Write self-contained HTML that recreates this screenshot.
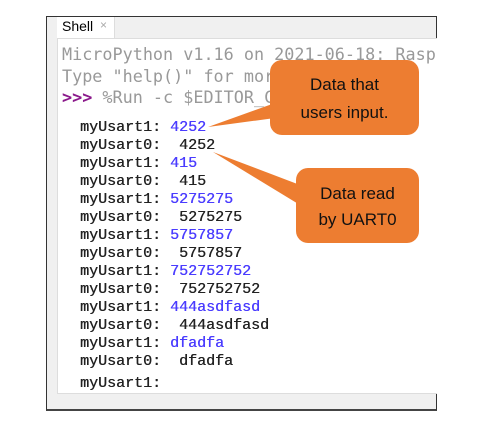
<!DOCTYPE html>
<html><head><style>
body{margin:0;width:488px;height:443px;background:#fff;position:relative;overflow:hidden}
.frame{position:absolute;left:46px;top:16px;width:389px;height:392px;border:1px solid #333;border-bottom:2px solid #444;background:#f0f0f0}
.tab{position:absolute;left:57px;top:17px;width:57px;height:21px;background:#fff;border-right:1px solid #ddd;font:14px "Liberation Sans",sans-serif}
.panel{position:absolute;left:57px;top:38px;width:379px;height:354px;background:#fff;border-left:1px solid #ddd;border-top:1px solid #ddd;border-bottom:1px solid #ddd;overflow:hidden}
.hd{position:absolute;left:62px;font:16.8px "DejaVu Sans Mono",monospace;color:#999;white-space:pre}
.o{position:absolute;left:80px;font:15px "Liberation Mono",monospace;color:#222;white-space:pre;line-height:18px;text-shadow:0.4px 0 0 #222}
.b{color:#4a3cff;text-shadow:0.3px 0 0 #4a3cff}
.call{position:absolute;background:#ed7d31;border-radius:12px;font:17px "Liberation Sans",sans-serif;color:#111;text-align:center}
</style></head><body>
<div class="frame"></div>
<div class="panel"></div>
<div class="tab"><span style="position:absolute;left:5px;top:1px">Shell</span><span style="position:absolute;left:43px;top:1px;color:#aaa;font-size:12px">×</span></div>
<div class="hd" style="top:44px;width:373px;overflow:hidden">MicroPython v1.16 on 2021-06-18: Rasp</div>
<div class="hd" style="top:66px">Type "help()" for more</div>
<div class="hd" style="top:87px"><span style="color:#8b1a8b;font-weight:bold">&gt;&gt;&gt;</span> %Run -c $EDITOR_C</div>
<div class="o" style="top:119px">myUsart1: <span class="b">4252</span>
myUsart0:  4252
myUsart1: <span class="b">415</span>
myUsart0:  415
myUsart1: <span class="b">5275275</span>
myUsart0:  5275275
myUsart1: <span class="b">5757857</span>
myUsart0:  5757857
myUsart1: <span class="b">752752752</span>
myUsart0:  752752752
myUsart1: <span class="b">444asdfasd</span>
myUsart0:  444asdfasd
myUsart1: <span class="b">dfadfa</span>
myUsart0:  dfadfa</div>
<div class="o" style="top:375px">myUsart1:</div>
<svg style="position:absolute;left:0;top:0" width="488" height="443"><polygon points="208,127 275,103 275,118" fill="#ed7d31"/><polygon points="213,152 300,185 300,205" fill="#ed7d31"/></svg>
<div class="call" style="left:270px;top:60px;width:149px;height:75px"><div style="position:absolute;width:100%;top:15px">Data that</div><div style="position:absolute;width:100%;top:43px">users input.</div></div>
<div class="call" style="left:296px;top:168px;width:123px;height:75px"><div style="position:absolute;width:100%;top:16px">Data read</div><div style="position:absolute;width:100%;top:42px">by UART0</div></div>
</body></html>
